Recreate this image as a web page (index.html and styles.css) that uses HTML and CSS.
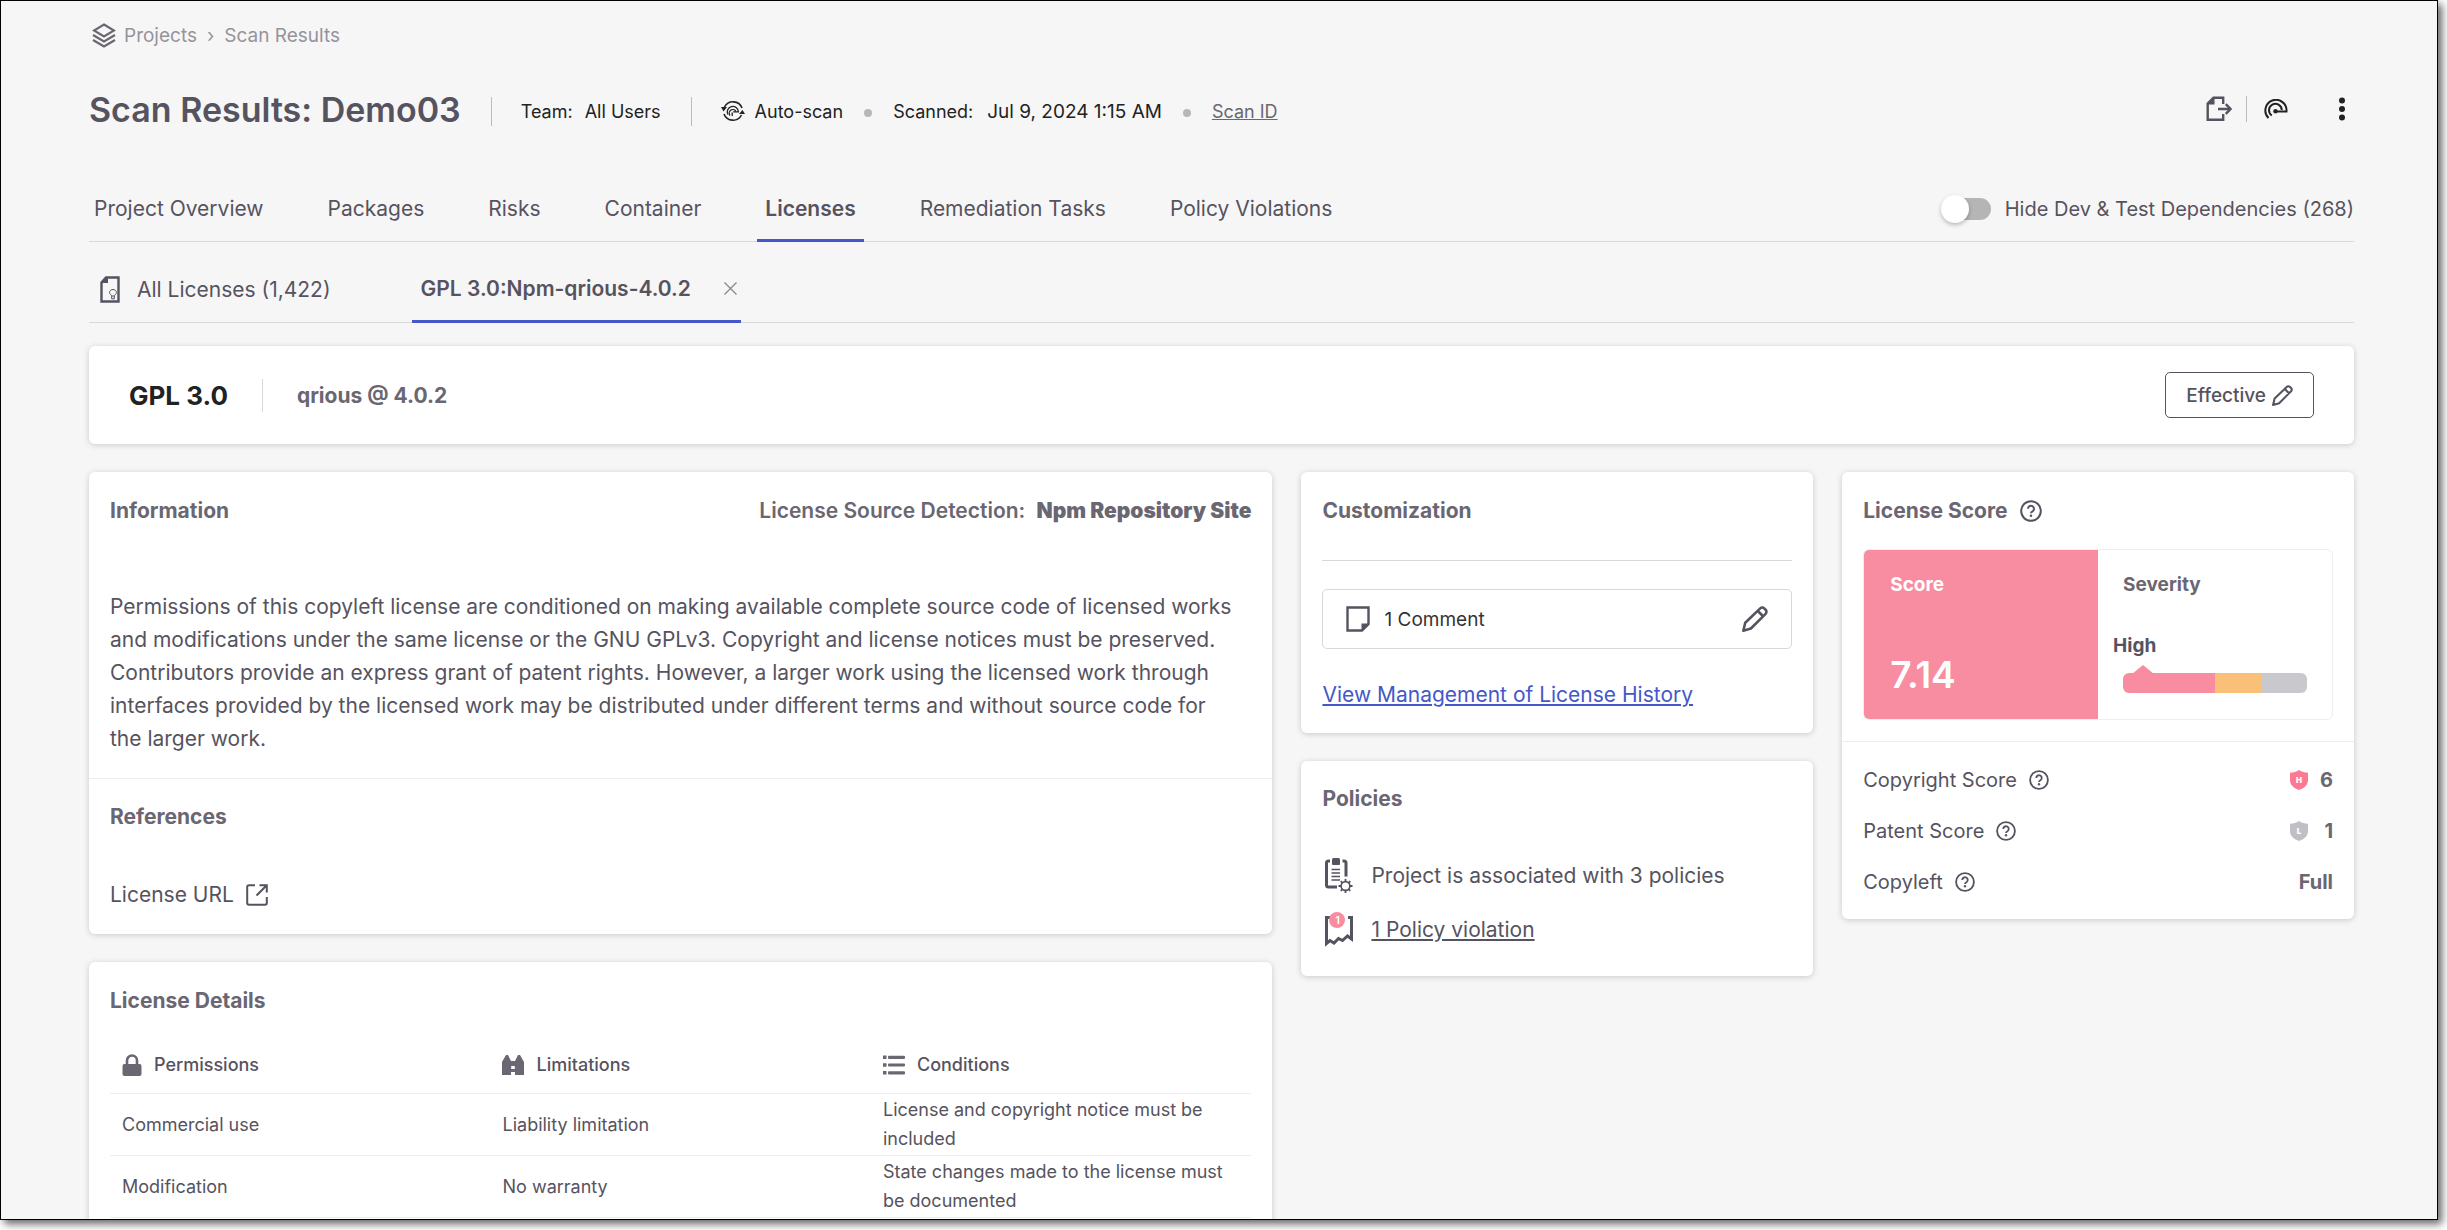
FILE: index.html
```html
<!DOCTYPE html>
<html lang="en">
<head>
  <meta charset="UTF-8" />
  <meta name="viewport" content="width=device-width, initial-scale=1.0"/>
  <title>Scan Results: Demo03</title>
  <link rel="stylesheet" href="styles.css">
</head>
<body>
  <svg class="sprite" aria-hidden="true">
    <symbol id="icon-help" viewBox="0 0 22 22">
      <circle cx="11" cy="11" r="9.8" fill="none" stroke="currentColor" stroke-width="2"/>
      <path d="M8 8.800a3 3 0 1 1 4.600 2.500c-1 .6-1.600 1-1.600 2" fill="none" stroke="currentColor" stroke-width="2"/>
      <circle cx="11" cy="15.700" r="1.300" fill="currentColor"/>
    </symbol>
    <symbol id="icon-pencil" viewBox="0 0 24 24">
      <path d="M1.2 22.8 3 15.5 16.8 2.2a2.6 2.6 0 0 1 3.7 0l1.3 1.3a2.6 2.6 0 0 1 0 3.7L8.2 20.8zM14.6 4.6l4.9 4.9" fill="none" stroke="currentColor" stroke-width="2.400" stroke-linejoin="round"/>
    </symbol>
    <symbol id="icon-shield" viewBox="0 0 18 20">
      <path d="M9 0c2.600 2 5.500 2.600 9 2.700v7.300c0 5-4 8.300-9 10-5-1.700-9-5-9-10V2.700C3.500 2.600 6.400 2 9 0z" fill="currentColor"/>
    </symbol>
  </svg>

  <div class="window">
    <nav class="breadcrumb" aria-label="Breadcrumb">
      <svg width="24" height="25" viewBox="0 0 24 25" fill="none" stroke="#6a6672" stroke-width="2.200">
        <path d="M12 1.500 22 7.500 12 13.500 2 7.500z"/>
        <path d="M1 12l11 6.500L23 12M1 17l11 6.500L23 17"/>
      </svg>
      <a href="#">Projects</a>
      <span class="crumb-sep">›</span>
      <a href="#">Scan Results</a>
    </nav>

    <header class="page-head">
      <h1>Scan Results: Demo03</h1>
      <div class="meta">
        <span class="meta-group"><span>Team:</span><span>All Users</span></span>
        <span class="meta-group">
          <svg width="24" height="22" viewBox="0 0 24 22" fill="none" stroke="#222" stroke-width="1.600">
            <path d="M3.500 7A9.600 9.600 0 0 1 21 8M20.500 15A9.600 9.600 0 0 1 3 14"/>
            <path d="M0 7h6l-3.500 4.500zM24 14h-6l3.500-4z" fill="#222" stroke="none"/>
            <path d="M6.800 14.500a5.600 5.600 0 1 1 10.600-2.700h-5.200M9 15.500a3.500 3.500 0 1 1 5.800-4.500M11.200 16v-3.500" stroke-width="1.300"/>
          </svg>
          <span>Auto-scan</span>
        </span>
        <span class="dot"></span>
        <span class="scanned"><span>Scanned:</span><time datetime="2024-07-09T01:15">Jul 9, 2024 1:15 AM</time></span>
        <span class="dot"></span>
        <a href="#" class="scan-id">Scan ID</a>
      </div>
      <div class="actions">
        <button type="button" class="icon-btn export" aria-label="Export">
          <svg width="26" height="26" viewBox="0 0 26 26" fill="none" stroke="#565360" stroke-width="2.400">
            <path d="M17.200 8V1.700H7.500L1.700 7.500v16.300h15.500V18"/>
            <path d="M1.500 8.500V7.300L7.300 1.500h1.200v7z" fill="#565360" stroke="none"/>
            <path d="M12 13h12M19.800 8.200l4.700 4.800-4.700 4.800"/>
          </svg>
        </button>
        <button type="button" class="icon-btn scan" aria-label="Rescan">
          <svg width="24" height="20" viewBox="0 0 24 20" fill="none" stroke="#222" stroke-width="2">
            <path d="M4.500 19A10.600 10.600 0 1 1 22.500 12.500H11"/>
            <path d="M7.800 16.500a6.400 6.400 0 1 1 10-5.500"/>
            <circle cx="11.500" cy="12.300" r="2.200" fill="#222" stroke="none"/>
          </svg>
        </button>
        <button type="button" class="icon-btn more" aria-label="More">
          <svg width="6" height="24" viewBox="0 0 6 24" fill="#222">
            <circle cx="3" cy="3.500" r="3"/><circle cx="3" cy="12" r="3"/><circle cx="3" cy="20.500" r="3"/>
          </svg>
        </button>
      </div>
    </header>

    <div class="tab-bar">
      <nav class="tabs">
        <a href="#">Project Overview</a>
        <a href="#">Packages</a>
        <a href="#">Risks</a>
        <a href="#">Container</a>
        <a href="#" class="active">Licenses</a>
        <a href="#">Remediation Tasks</a>
        <a href="#">Policy Violations</a>
      </nav>
      <label class="toggle">
        <input type="checkbox">
        <span>Hide Dev &amp; Test Dependencies (268)</span>
      </label>
    </div>

    <div class="sub-tabs">
      <a href="#" class="sub-tab">
        <svg width="20" height="27" viewBox="0 0 20 27" fill="none" stroke="#565360">
          <path d="M6 1.500h12.500v24h-17V6.500z" stroke-width="2.400"/>
          <path d="M1 7V6l5-5h2v6z" fill="#565360" stroke="none"/>
          <path d="M11.700 19.500c-3.800-2.400-2-6 1.300-6s5.100 3.600 1.300 6v3.300h-2.600zM11.700 20h2.600" stroke-width="1"/>
        </svg>
        <span>All Licenses (1,422)</span>
      </a>
      <div class="sub-tab active">
        <a href="#">GPL 3.0:Npm-qrious-4.0.2</a>
        <button type="button" class="icon-btn" aria-label="Close tab">
          <svg width="13" height="13" viewBox="0 0 13 13" stroke="#8d8a95" stroke-width="1.400"><path d="M.5.500l12 12M12.500.500l-12 12"/></svg>
        </button>
      </div>
    </div>

    <section class="card license-head">
      <h2>GPL 3.0</h2>
      <span class="package">qrious @ 4.0.2</span>
      <button type="button" class="effective">Effective
        <svg width="21" height="21"><use href="#icon-pencil"/></svg>
      </button>
    </section>

    <main class="columns">
      <div class="column">
        <section class="card info">
          <div class="info-head">
            <h3>Information</h3>
            <p class="source">License Source Detection: <strong>Npm Repository Site</strong></p>
          </div>
          <p class="description">Permissions of this copyleft license are conditioned on making available complete source code of licensed works and modifications under the same license or the GNU GPLv3. Copyright and license notices must be preserved. Contributors provide an express grant of patent rights. However, a larger work using the licensed work through interfaces provided by the licensed work may be distributed under different terms and without source code for the larger work.</p>
          <div class="references">
            <h3>References</h3>
            <a href="#" class="license-url">License URL
              <svg width="22" height="22" viewBox="0 0 22 22" fill="none" stroke="#565360" stroke-width="2">
                <path d="M9 1.200H3A1.800 1.800 0 0 0 1.200 3v16A1.800 1.800 0 0 0 3 20.800h16a1.800 1.800 0 0 0 1.800-1.800v-6M13.500 1.200h7.300v7.300M20.500 1.500l-10 10"/>
              </svg>
            </a>
          </div>
        </section>

        <section class="card details">
          <h3>License Details</h3>
          <table>
            <thead>
              <tr>
                <th>
                  <div class="th">
                    <svg width="20" height="22" viewBox="0 0 20 22">
                      <path d="M5 11V6.500a5 5 0 0 1 10 0V11" fill="none" stroke="#6a6672" stroke-width="2.600"/>
                      <rect x=".5" y="10" width="19" height="12" rx="2" fill="#6a6672"/>
                    </svg>
                    Permissions
                  </div>
                </th>
                <th>
                  <div class="th">
                    <svg width="22" height="20" viewBox="0 0 22 20" fill="#6a6672" fill-rule="evenodd">
                      <path d="M0 20V7L4 0h2l3 6h4l3-6h2l4 7v13h-9v-3H9v3zM9.200 11v3h3.600v-3z"/>
                    </svg>
                    Limitations
                  </div>
                </th>
                <th>
                  <div class="th">
                    <svg width="22" height="20" viewBox="0 0 22 20" fill="#6a6672">
                      <path d="M0 .5h3.500v3.500H0zM0 8.200h3.500v3.500H0zM0 16h3.500v3.500H0z"/>
                      <path d="M6 .7h15q1 0 1 1v1.200q0 1-1 1H6q-1 0-1-1V1.700q0-1 1-1zM6 8.400h15q1 0 1 1v1.200q0 1-1 1H6q-1 0-1-1V9.400q0-1 1-1zM6 16.200h15q1 0 1 1v1.200q0 1-1 1H6q-1 0-1-1v-1.200q0-1 1-1z"/>
                    </svg>
                    Conditions
                  </div>
                </th>
              </tr>
            </thead>
            <tbody>
              <tr>
                <td>Commercial use</td>
                <td>Liability limitation</td>
                <td>License and copyright notice must be included</td>
              </tr>
              <tr>
                <td>Modification</td>
                <td>No warranty</td>
                <td>State changes made to the license must be documented</td>
              </tr>
            </tbody>
          </table>
        </section>
      </div>

      <div class="column">
        <section class="card customization">
          <h3>Customization</h3>
          <hr>
          <div class="comment">
            <svg width="24" height="26" viewBox="0 0 24 26">
              <path d="M1.500 1.500h21V18L16 24.500H1.500z" fill="none" stroke="#565360" stroke-width="2.400"/>
              <path d="M15.500 17.500h7.500v1.200L16.700 25h-1.200z" fill="#565360"/>
            </svg>
            <span>1 Comment</span>
            <button type="button" class="icon-btn" aria-label="Edit comment">
              <svg width="26" height="26"><use href="#icon-pencil"/></svg>
            </button>
          </div>
          <a href="#" class="history">View Management of License History</a>
        </section>

        <section class="card policies">
          <h3>Policies</h3>
          <div class="policy-row">
            <svg width="28" height="35" viewBox="0 0 28 35" fill="none" stroke="#565360">
              <path d="M5 3H3.500Q1.500 3 1.500 5v22q0 2 2 2H12M17.500 3H19q2 0 2 2v13.500" stroke-width="3"/>
              <path d="M7 1.500Q7 0 8.500 0h5Q15 0 15 1.500V6q0 1-1 1H8q-1 0-1-1z" fill="#565360" stroke="none"/>
              <path d="M6.500 11.500h8.500M6.500 15h8.500M6.500 18.500h8.500M6.500 22h8.500" stroke-width="1.500"/>
              <circle cx="20.500" cy="28" r="4.400" stroke-width="1.600"/>
              <path d="M20.500 24v-3M20.500 32v3M16.500 28h-3M24.500 28h3M17.700 25.200l-2-2M23.300 30.800l2 2M17.700 30.800l-2 2M23.300 25.200l2-2" stroke-width="1.800"/>
            </svg>
            <span>Project is associated with 3 policies</span>
          </div>
          <div class="policy-row">
            <span class="violation-icon">
              <svg width="28" height="35" viewBox="0 0 28 35" fill="none" stroke="#565360" stroke-width="3">
                <path d="M5 5.500H1.500V31.500L5 28.500l4 2.500 4.500-4.500 4 2 5-4.500 4 3V5.500H23"/>
              </svg>
              <span class="badge">1</span>
            </span>
            <a href="#">1 Policy violation</a>
          </div>
        </section>
      </div>

      <div class="column">
        <section class="card score">
          <h3>License Score <svg class="help" width="22" height="22"><use href="#icon-help"/></svg></h3>
          <div class="score-box">
            <div class="score-value">
              <h4>Score</h4>
              <strong>7.14</strong>
            </div>
            <div class="severity">
              <h4>Severity</h4>
              <div class="level">High</div>
              <div class="severity-bar">
                <span class="high"></span><span class="medium"></span><span class="low"></span>
              </div>
            </div>
          </div>
          <dl>
            <div>
              <dt>Copyright Score <svg class="help" width="20" height="20"><use href="#icon-help"/></svg></dt>
              <dd><span class="shield shield-high"><svg width="18" height="20"><use href="#icon-shield"/></svg><b>H</b></span><span class="points">6</span></dd>
            </div>
            <div>
              <dt>Patent Score <svg class="help" width="20" height="20"><use href="#icon-help"/></svg></dt>
              <dd><span class="shield shield-low"><svg width="18" height="20"><use href="#icon-shield"/></svg><b>L</b></span><span class="points">1</span></dd>
            </div>
            <div>
              <dt>Copyleft <svg class="help" width="20" height="20"><use href="#icon-help"/></svg></dt>
              <dd>Full</dd>
            </div>
          </dl>
        </section>
      </div>
    </main>
  </div>
</body>
</html>
```
FILE: styles.css
```css
* {
  box-sizing: border-box;
}

body {
  margin: 0;
  background: #fff;
  color: #565360;
  font-family: Inter, "Liberation Sans", sans-serif;
  font-size: 21px;
  overflow: hidden;
}

h1, h2, h3, h4, p, dl, dd {
  margin: 0;
}

a {
  color: inherit;
  text-decoration: none;
}

button {
  font: inherit;
  color: inherit;
}

svg {
  flex: none;
  display: block;
}

.sprite {
  display: none;
}

.icon-btn {
  display: flex;
  padding: 0;
  border: 0;
  background: none;
}

.window {
  height: calc(100vh - 10px);
  margin: 0 9px 10px 0;
  padding: 0 83px 0 88px;
  border: 1px solid #000;
  background: #f6f6f6;
  box-shadow: 4px 4px 8px rgba(0, 0, 0, 0.6);
  overflow: hidden;
}

/* top of the page */
.breadcrumb {
  display: flex;
  align-items: center;
  gap: 10px;
  padding-left: 3px;
  height: 68px;
  font-size: 19px;
  color: #96939c;
}

.breadcrumb svg {
  margin-right: -2px;
}

.page-head {
  display: flex;
  align-items: center;
  height: 80px;
}

h1 {
  font-size: 34px;
  font-weight: 600;
}

.meta {
  display: flex;
  align-items: center;
  padding-top: 4px;
  margin-left: 30px;
  font-size: 18px;
  color: #222;
}

.meta-group {
  display: flex;
  align-items: center;
  gap: 12px;
  height: 29px;
  padding-left: 29px;
  margin-right: 30px;
  border-left: 1px solid #bbb;
}

.meta-group:nth-child(2) {
  gap: 10px;
  margin-right: 0;
}

.scanned {
  display: flex;
  align-items: baseline;
  gap: 14px;
}

.scanned time {
  font-size: 19px;
}

.dot {
  width: 8px;
  height: 8px;
  margin: 4px 21px 0;
  border-radius: 50%;
  background: #b8b8b8;
}

.scan-id {
  color: #6a6672;
  text-decoration: underline;
}

.actions {
  display: flex;
  align-items: center;
  height: 26px;
  margin-left: auto;
}

.export {
  padding-right: 14px;
  border-right: 1px solid #bbb;
}

.scan {
  padding: 0 51px 0 17px;
}

.more {
  margin-right: 9px;
}

/* tabs */
.tab-bar {
  display: flex;
  justify-content: space-between;
  height: 93px;
  border-bottom: 1px solid #d8d8da;
}

.tabs {
  display: flex;
  gap: 48px;
  margin-left: -3px;
}

.tabs a {
  padding: 47px 8px 0;
  height: 93px;
}

.tabs .active {
  font-weight: 600;
  border-bottom: 3px solid #4557c9;
}

.toggle {
  display: flex;
  align-items: center;
  gap: 14px;
  padding-top: 27px;
  font-size: 20px;
}

.toggle input {
  appearance: none;
  position: relative;
  width: 46px;
  height: 22px;
  margin: 0;
  border-radius: 11px;
  background: #b5b5b5;
}

.toggle input::before {
  content: "";
  position: absolute;
  left: -4px;
  top: -3px;
  width: 28px;
  height: 28px;
  border-radius: 50%;
  background: #fff;
  box-shadow: 0 2px 4px rgba(0, 0, 0, 0.25);
}

.sub-tabs {
  display: flex;
  gap: 72px;
  height: 81px;
  padding-left: 11px;
  border-bottom: 1px solid #d8d8da;
}

.sub-tab {
  display: flex;
  align-items: center;
  gap: 17px;
  height: 81px;
  padding-top: 14px;
  padding-right: 9px;
}

.sub-tab.active {
  gap: 33px;
  padding: 14px 4px 0 9px;
  border-bottom: 3px solid #4557c9;
  font-weight: 600;
}

/* cards */
.card {
  background: #fff;
  border-radius: 6px;
  box-shadow: 0 1px 6px rgba(0, 0, 0, 0.18);
}

.license-head {
  display: flex;
  align-items: center;
  height: 98px;
  margin: 23px 0 28px;
  padding: 0 40px;
}

h2 {
  font-size: 26px;
  font-weight: 700;
  color: #222;
}

.package {
  margin-left: 34px;
  padding: 4px 0 4px 34px;
  border-left: 1px solid #d8d8da;
  font-weight: 700;
  color: #6a6672;
}

.effective {
  display: flex;
  align-items: center;
  gap: 6px;
  height: 46px;
  margin-left: auto;
  padding: 0 20px;
  border: 1px solid #565360;
  border-radius: 5px;
  background: #fff;
  font-size: 19px;
  font-weight: 500;
}

.columns {
  display: grid;
  grid-template-columns: 37fr 16fr 16fr;
  gap: 29px;
  align-items: start;
}

.column {
  display: grid;
  gap: 28px;
}

h3 {
  font-size: 21px;
  font-weight: 700;
  line-height: 26px;
  color: #6a6672;
}

.info {
  padding-bottom: 26px;
}

.info-head {
  display: flex;
  justify-content: space-between;
  padding: 26px 21px 0;
}

.source {
  line-height: 26px;
  font-weight: 600;
  color: #6a6672;
}

.source strong {
  margin-left: 6px;
  font-weight: 900;
}

.description {
  padding: 66px 36px 23px 21px;
  line-height: 33px;
}

.references {
  padding: 25px 21px 0;
  border-top: 1px solid #eee;
}

.license-url {
  display: flex;
  align-items: center;
  gap: 12px;
  margin-top: 52px;
  line-height: 26px;
}

.details {
  padding: 26px 21px;
}

table {
  width: 100%;
  margin-top: 23px;
  border-collapse: collapse;
  table-layout: fixed;
  font-size: 18px;
}

th, td {
  height: 62px;
  padding: 0 12px;
  border-bottom: 1px solid #eee;
  line-height: 29px;
  text-align: left;
}

th {
  height: 56px;
  font-weight: 500;
}

.th {
  display: flex;
  align-items: center;
  gap: 12px;
}

.customization {
  padding: 26px 21px;
}

hr {
  height: 1px;
  margin: 36px 0 28px;
  border: 0;
  background: #d8d8da;
}

.comment {
  display: flex;
  align-items: center;
  gap: 14px;
  height: 60px;
  margin-bottom: 33px;
  padding: 0 23px;
  border: 1px solid #d8d8da;
  border-radius: 5px;
  font-size: 19px;
  color: #333;
}

.comment .icon-btn {
  margin-left: auto;
  color: #565360;
}

.history {
  line-height: 25px;
  color: #4557c9;
  text-decoration: underline;
}

.policies {
  padding: 25px 21px 29px;
}

.policies h3 {
  margin-bottom: 46px;
}

.policy-row {
  display: flex;
  align-items: center;
  gap: 18px;
  height: 35px;
  padding-left: 3px;
}

.policy-row + .policy-row {
  margin-top: 19px;
}

.policy-row a {
  text-decoration: underline;
}

.violation-icon {
  position: relative;
}

.badge {
  position: absolute;
  left: 4px;
  top: 0;
  width: 16px;
  height: 16px;
  border-radius: 50%;
  background: #f88ca0;
  color: #fff;
  font-size: 11px;
  font-weight: 600;
  line-height: 16px;
  text-align: center;
}

/* score card */
.score {
  padding-top: 26px;
}

.score h3 {
  display: flex;
  align-items: center;
  gap: 12px;
  padding-left: 21px;
}

.help {
  color: #565360;
}

.score-box {
  display: grid;
  grid-template-columns: 1fr 1fr;
  margin: 25px 21px 21px;
  border: 1px solid #eee;
  border-radius: 6px;
  overflow: hidden;
}

h4 {
  font-size: 19px;
  font-weight: 700;
  line-height: 24px;
}

.score-value {
  padding: 23px 26px 22px;
  background: #f88ca0;
  color: #fff;
}

.score-value strong {
  display: block;
  margin-top: 56px;
  font-size: 37px;
  font-weight: 600;
  line-height: 44px;
}

.severity {
  padding: 23px 25px;
}

.severity h4 {
  color: #6a6672;
}

.level {
  margin: 37px 0 15px -10px;
  font-size: 19px;
  font-weight: 700;
  line-height: 24px;
}

.severity-bar {
  position: relative;
  display: grid;
  grid-template-columns: 2fr 1fr 1fr;
  height: 20px;
}

.severity-bar::before {
  content: "";
  position: absolute;
  left: 9px;
  top: -8px;
  border: solid transparent;
  border-width: 0 11px 9px;
  border-bottom-color: #f88ca0;
}

.high {
  background: #f88ca0;
  border-radius: 6px 0 0 6px;
}

.medium {
  background: #fbc078;
}

.low {
  background: #c8c8cd;
  border-radius: 0 6px 6px 0;
}

dl {
  padding: 12px 21px;
  border-top: 1px solid #eee;
  font-size: 20px;
}

dl div {
  display: flex;
  justify-content: space-between;
  align-items: center;
  height: 51px;
}

dt, dd {
  display: flex;
  align-items: center;
  gap: 12px;
}

dd {
  font-weight: 700;
  color: #6a6672;
}

.points {
  min-width: 13px;
  text-align: right;
}

.shield {
  position: relative;
}

.shield b {
  position: absolute;
  left: 0;
  top: 4px;
  width: 18px;
  color: #fff;
  font-size: 8px;
  line-height: 12px;
  text-align: center;
}

.shield-high {
  color: #fb7a92;
}

.shield-low {
  color: #c0bfc7;
}
```
